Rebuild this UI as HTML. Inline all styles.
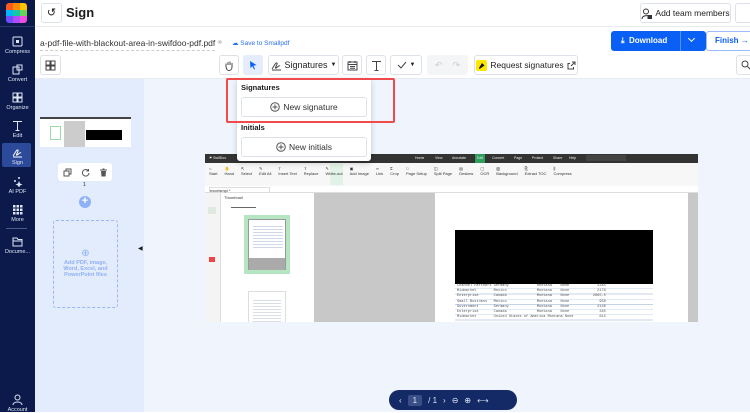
<!DOCTYPE html>
<html><head><meta charset="utf-8"><style>
*{box-sizing:border-box;margin:0;padding:0}
body{width:750px;height:412px;overflow:hidden;font-family:"Liberation Sans",sans-serif;background:#fff;position:relative;color:#1a1a1a}
.a{position:absolute}
.sb{left:0;top:0;width:35px;height:412px;background:#0b1a4b}
.si{position:absolute;left:0;width:35px;text-align:center;color:#dfe6f5;font-size:5.5px;white-space:nowrap}
.si svg{display:block;margin:0 auto 2px}
.btn{position:absolute;border:1px solid #dde1e8;border-radius:3px;background:#fff}
.tb{font-size:9px;color:#222;display:flex;align-items:center;justify-content:center;white-space:nowrap;gap:3px}
.sm{font-size:4px;color:#333}
</style></head><body>
<div class="a sb"></div>
<div class="a" style="left:6px;top:3px;width:21px;height:20px;border-radius:3px;overflow:hidden;display:grid;grid-template-columns:1fr 1fr 1fr">
<div style="background:#ff5a1f"></div><div style="background:#ff8c00"></div><div style="background:#ffc400"></div>
<div style="background:#00b4ff"></div><div style="background:#17c7a0"></div><div style="background:#6ad15a"></div>
<div style="background:#6e4cff"></div><div style="background:#b04cff"></div><div style="background:#f04ce0"></div></div>
<div class="a" style="left:0;top:26px;width:35px;height:1px;background:#2a3a6a"></div>
<div class="si" style="top:36px"><svg width="11" height="11"><rect x="1" y="1" width="9" height="9" rx="1" fill="none" stroke="#dfe6f5"/><rect x="4" y="4" width="3" height="3" fill="#dfe6f5"/></svg>Compress</div>
<div class="si" style="top:64px"><svg width="11" height="11"><rect x="1" y="3" width="6" height="7" fill="none" stroke="#dfe6f5"/><rect x="5" y="1" width="5" height="5" fill="none" stroke="#dfe6f5"/></svg>Convert</div>
<div class="si" style="top:92px"><svg width="11" height="11" fill="none" stroke="#dfe6f5"><rect x="1" y="1" width="4" height="4"/><rect x="6" y="1" width="4" height="4"/><rect x="1" y="6" width="4" height="4"/><rect x="6" y="6" width="4" height="4"/></svg>Organize</div>
<div class="si" style="top:120px"><svg width="11" height="11" stroke="#dfe6f5"><path d="M1 1.5H10M5.5 1.5V10.5M3.5 10.5H7.5"/></svg>Edit</div>
<div class="a" style="left:2px;top:143px;width:29px;height:24px;background:#2b4a9a;border-radius:2px"></div>
<div class="si" style="top:147px"><svg width="11" height="11" fill="none" stroke="#fff"><path d="M1 9C3 6 5 2 6 3S3 9 5 8 8 5 9 6M1 10H10"/></svg>Sign</div>
<div class="si" style="top:176px"><svg width="11" height="11" fill="#dfe6f5"><circle cx="3" cy="5" r="1"/><circle cx="7" cy="2" r="1"/><path d="M7 5L8 7.5 10.5 8.5 8 9.5 7 12 6 9.5 3.5 8.5 6 7.5Z"/></svg>AI PDF</div>
<div class="si" style="top:204px"><svg width="11" height="11" fill="#dfe6f5"><rect x="1" y="1" width="2.5" height="2.5"/><rect x="4.5" y="1" width="2.5" height="2.5"/><rect x="8" y="1" width="2.5" height="2.5"/><rect x="1" y="4.5" width="2.5" height="2.5"/><rect x="4.5" y="4.5" width="2.5" height="2.5"/><rect x="8" y="4.5" width="2.5" height="2.5"/><rect x="1" y="8" width="2.5" height="2.5"/><rect x="4.5" y="8" width="2.5" height="2.5"/><rect x="8" y="8" width="2.5" height="2.5"/></svg>More</div>
<div class="a" style="left:6px;top:228px;width:21px;height:1px;background:#4a5a88"></div>
<div class="si" style="top:236px"><svg width="11" height="11" fill="none" stroke="#dfe6f5"><path d="M1 2H5L6 3.5H10V10H1Z"/><path d="M1 5H10"/></svg>Docume...</div>
<div class="si" style="top:394px"><svg width="11" height="11" fill="none" stroke="#dfe6f5"><circle cx="5.5" cy="3.5" r="2.5"/><path d="M1 11C1 7 10 7 10 11"/></svg>Account</div>

<!-- header -->
<div class="a" style="left:35px;top:26px;width:715px;height:1px;background:#e8ebf0"></div>
<div class="btn" style="left:41px;top:3px;width:21px;height:20px;font-size:11px;text-align:center;line-height:18px">↺</div>
<div class="a" style="left:66px;top:5px;font-size:13px;font-weight:bold">Sign</div>
<div class="btn tb" style="left:640px;top:3px;width:91px;height:20px;font-size:8.5px"><svg width="11" height="11" fill="none" stroke="#333"><circle cx="5" cy="3.5" r="2.5"/><path d="M1 11C1 7 8 7 9 9"/><rect x="7" y="7.5" width="3.5" height="3" fill="#333"/></svg>Add team members</div>
<div class="btn" style="left:735px;top:3px;width:20px;height:20px"></div>

<div class="a" style="left:40px;top:38px;font-size:8.5px;color:#333;border-bottom:1px dashed #ccc;padding-bottom:2px;white-space:nowrap">a-pdf-file-with-blackout-area-in-swifdoo-pdf.pdf</div>
<div class="a" style="left:216px;top:37px;font-size:9px;color:#bbb">⚭</div>
<div class="a" style="left:232px;top:39px;font-size:6.5px;color:#2a6ef2;white-space:nowrap">☁ Save to Smallpdf</div>
<div class="a" style="left:611px;top:31px;width:95px;height:20px;background:#0a5ff5;border-radius:3px;color:#fff;font-size:8px;font-weight:bold;line-height:20px;padding-left:10px">⤓&nbsp; Download</div>
<div class="a" style="left:680px;top:31px;width:1px;height:20px;background:#5a8ff8"></div>
<div class="a" style="left:689px;top:36px;width:5px;height:5px;border-right:1px solid #fff;border-bottom:1px solid #fff;transform:rotate(45deg)"></div>
<div class="a" style="left:706px;top:31px;width:50px;height:20px;border:1px solid #9bbcf8;border-radius:3px;color:#0a5ff5;font-size:8px;font-weight:bold;line-height:18px;padding-left:8px;white-space:nowrap">Finish →</div>

<!-- toolbar -->
<div class="btn tb" style="left:40px;top:55px;width:21px;height:20px"><svg width="11" height="11" fill="none" stroke="#444"><rect x="1" y="1" width="4" height="4"/><rect x="6" y="1" width="4" height="4"/><rect x="1" y="6" width="4" height="4"/><rect x="6" y="6" width="4" height="4"/></svg></div>
<div class="btn tb" style="left:219px;top:55px;width:20px;height:20px"><svg width="10" height="11" fill="none" stroke="#444"><path d="M2 6V3.5M4 5V2M6 5V1.5M8 5.5V3M2 6C2 9 3.5 10.5 5 10.5S8 9.5 8 7V5.5"/></svg></div>
<div class="a tb" style="left:243px;top:55px;width:20px;height:20px;background:#e4ecfd;border-radius:3px"><svg width="10" height="10"><path d="M2 1L8.5 5 5.5 5.8 7 9 6 9.5 4.5 6.3 2.5 8Z" fill="#0a5ff5"/></svg></div>
<div class="btn tb" style="left:268px;top:55px;width:71px;height:20px"><svg width="11" height="11" fill="none" stroke="#444"><path d="M1 9C3 6 5 2 6 3S3 9 5 8 8 5 9 6M1 10H10"/></svg>Signatures <span style="font-size:6px">▼</span></div>
<div class="btn tb" style="left:342px;top:55px;width:20px;height:20px"><svg width="11" height="11" fill="none" stroke="#444"><rect x="1" y="2" width="9" height="8"/><path d="M1 4.5H10M3 1V3M8 1V3M3 6.5H8M3 8.3H8"/></svg></div>
<div class="btn tb" style="left:366px;top:55px;width:20px;height:20px"><svg width="11" height="11" stroke="#444" fill="none"><path d="M1 1.5H10M5.5 1.5V10.5M3.5 10.5H7.5"/></svg></div>
<div class="btn tb" style="left:390px;top:55px;width:32px;height:20px"><svg width="10" height="8" fill="none" stroke="#444"><path d="M1 4L4 7 9 1"/></svg><span style="font-size:6px">▼</span></div>
<div class="a tb" style="left:427px;top:55px;width:41px;height:20px;background:#f4f5f7;border-radius:3px;color:#ccc;gap:10px">↶<span>↷</span></div>
<div class="btn tb" style="left:474px;top:55px;width:104px;height:20px;font-size:8.5px"><span style="background:#ffe600;border-radius:2px;width:11px;height:11px;display:inline-block;position:relative"><svg width="11" height="11" style="position:absolute;left:0;top:0"><path d="M3 8L6 3 8.5 5.5 3.5 9Z" fill="#111"/></svg></span>Request signatures <svg width="9" height="9" fill="none" stroke="#444"><path d="M5 1H8V4M8 1L4 5M6.5 6V8H1V2.5H3"/></svg></div>
<div class="btn tb" style="left:736px;top:55px;width:20px;height:20px"><svg width="10" height="10" fill="none" stroke="#444"><circle cx="4" cy="4" r="3"/><path d="M6.5 6.5L9.5 9.5"/></svg></div>
<div class="a" style="left:35px;top:78px;width:715px;height:1px;background:#e8ebf0"></div>

<!-- content -->
<div class="a" style="left:35px;top:79px;width:109px;height:333px;background:#e3ecfc"></div>
<div class="a" style="left:144px;top:79px;width:606px;height:333px;background:#eff4fd"></div>
<div class="a" style="left:40px;top:117px;width:91px;height:30px;background:#fff;border-top:2px solid #444">
<div class="a" style="left:10px;top:7px;width:11px;height:14px;border:1px solid #9ed9a8"></div>
<div class="a" style="left:24px;top:2px;width:21px;height:26px;background:#ccc"></div>
<div class="a" style="left:46px;top:11px;width:36px;height:10px;background:#000"></div></div>
<div class="a" style="left:58px;top:163px;width:54px;height:18px;background:#fff;border-radius:3px;display:flex;justify-content:space-around;align-items:center">
<svg width="9" height="9" fill="none" stroke="#555"><rect x="1" y="3" width="5" height="5"/><path d="M3 3V1H8V6H6"/></svg>
<svg width="9" height="9" fill="none" stroke="#555"><path d="M7.5 3A3.3 3.3 0 1 0 8 5M7.5 1V3H5.5"/></svg>
<svg width="9" height="9" fill="#555"><rect x="1" y="1.5" width="7" height="1"/><rect x="3.5" y="0.5" width="2" height="1"/><path d="M2 3H7L6.5 8.5H2.5Z"/></svg></div>
<div class="a" style="left:83px;top:182px;font-size:5px">1</div>
<div class="a" style="left:79px;top:196px;width:12px;height:12px;border-radius:50%;background:#8fb2f7;color:#fff;font-size:11px;line-height:11px;text-align:center;font-weight:bold">+</div>
<div class="a" style="left:53px;top:220px;width:65px;height:88px;border:1px dashed #9ab7f3;border-radius:3px;text-align:center;color:#8fb0f4;font-size:5.5px;font-weight:bold;padding-top:27px;line-height:6px"><div style="font-size:10px;font-weight:normal;line-height:12px">⊕</div>Add PDF, image,<br>Word, Excel, and<br>PowerPoint files</div>
<div class="a" style="left:138px;top:245px;font-size:6px">◀</div>

<!-- embedded screenshot -->
<div class="a" style="left:205px;top:154px;width:493px;height:168px;background:#c8c8c8;overflow:hidden">
<div class="a" style="left:0;top:0;width:493px;height:9px;background:#333;color:#eee;font-size:3.5px;line-height:9px;padding-left:4px">⚑ SwifDoo
<span class="a" style="left:210px">Home</span><span class="a" style="left:230px">View</span><span class="a" style="left:247px">Annotate</span><span class="a" style="left:270px;background:#2e9d5e;padding:0 2px">Edit</span><span class="a" style="left:287px">Convert</span><span class="a" style="left:309px">Page</span><span class="a" style="left:327px">Protect</span><span class="a" style="left:348px">Share</span><span class="a" style="left:364px">Help</span><span class="a" style="left:381px;width:40px;height:6px;top:1px;background:#444"></span></div>
<div class="a" style="left:0;top:9px;width:493px;height:23px;background:#f7f7f7"></div>
<div class="a" style="left:125px;top:10px;width:13px;height:21px;background:#e1f3e6"></div>
<div class="a sm" style="left:4px;top:12px;width:390px;display:flex;gap:7px;line-height:5px;white-space:nowrap"><span>⌂<br>Start</span><span>✋<br>Hand</span><span>⇱<br>Select</span><span>✎<br>Edit All</span><span>T<br>Insert Text</span><span>⇪<br>Replace</span><span>✎<br>White-out</span><span>▣<br>Add Image</span><span>∞<br>Link</span><span>⌗<br>Crop</span><span>□<br>Page Setup</span><span>◫<br>Split Page</span><span>▤<br>Deskew</span><span>▢<br>OCR</span><span>▧<br>Background</span><span>⎘<br>Extract TOC</span><span>⫼<br>Compress</span></div>
<div class="a" style="left:0;top:32px;width:493px;height:7px;background:#fff;border-bottom:1px solid #ddd"><div class="a sm" style="left:4px;top:1px;width:61px;height:6px;border:1px solid #ddd;border-bottom:none">excelsmpl *</div></div>
<div class="a" style="left:0;top:39px;width:15px;height:129px;background:#f4f4f4"><div class="a" style="left:3px;top:14px;width:8px;height:7px;background:#dfe9df"></div><div class="a" style="left:4px;top:64px;width:6px;height:5px;background:#e44"></div></div>
<div class="a" style="left:15px;top:39px;width:94px;height:129px;background:#fff;border-left:1px solid #ddd">
<div class="a sm" style="left:3px;top:2px">Thumbnail</div>
<div class="a" style="left:10px;top:14px;width:25px;height:1px;background:#666"></div>
<div class="a" style="left:23px;top:22px;width:46px;height:59px;background:#b6e5c2"><div class="a" style="left:4px;top:4px;width:38px;height:51px;background:#fff;border:1px solid #999"><div class="a" style="left:4px;top:4px;width:30px;height:26px;background:repeating-linear-gradient(#fff 0 2px,#cfd8e6 2px 3px)"></div><div class="a" style="left:0;top:38px;width:36px;height:12px;background:#aaa"></div></div></div>
<div class="a" style="left:27px;top:98px;width:38px;height:40px;background:#fff;border:1px solid #ddd"><div class="a" style="left:4px;top:6px;width:28px;height:30px;background:repeating-linear-gradient(#fff 0 2px,#d8dde6 2px 3px)"></div></div></div>
<div class="a" style="left:230px;top:39px;width:253px;height:129px;background:#fff">
<div class="a" style="left:20px;top:37px;width:198px;height:54px;background:#000"></div>
<div class="a" style="left:20px;top:91px;width:198px;height:38px;background:repeating-linear-gradient(#fff 0 4.5px,#c6d3ea 4.5px 5.2px);font-family:'Liberation Mono',monospace;font-size:3.6px;line-height:5.2px;color:#555;padding-left:2px;white-space:pre">Channel Partners Germany             Montana    None             1345
Midmarket        Mexico              Montana    None             2178
Enterprise       Canada              Montana    None           2665.5
Small Business   Mexico              Montana    None              958
Government       Germany             Montana    None             2146
Enterprise       Canada              Montana    None              345
Midmarket        United States of America Montana None            615</div></div>
</div>

<!-- dropdown -->
<div class="a" style="left:237px;top:78px;width:134px;height:83px;background:#fff;border-radius:3px;box-shadow:0 2px 6px rgba(0,0,0,.2)"></div>
<div class="a" style="left:226px;top:78px;width:169px;height:45px;border:2.5px solid #f04b4b;border-radius:2px"></div>
<div class="a" style="left:241px;top:83px;font-size:7.5px;font-weight:bold">Signatures</div>
<div class="btn tb" style="left:241px;top:97px;width:126px;height:20px;font-size:8.5px;color:#333"><svg width="10" height="10" fill="none" stroke="#555"><circle cx="5" cy="5" r="4.3"/><path d="M5 2.5V7.5M2.5 5H7.5"/></svg>New signature</div>
<div class="a" style="left:241px;top:123px;font-size:7.5px;font-weight:bold">Initials</div>
<div class="btn tb" style="left:241px;top:137px;width:126px;height:20px;font-size:8.5px;color:#333"><svg width="10" height="10" fill="none" stroke="#555"><circle cx="5" cy="5" r="4.3"/><path d="M5 2.5V7.5M2.5 5H7.5"/></svg>New initials</div>

<!-- pager -->
<div class="a" style="left:389px;top:390px;width:128px;height:20px;background:#132a66;border-radius:10px;color:#dfe6f5;font-size:8px;display:flex;align-items:center;padding-left:10px;gap:6px;white-space:nowrap">
<span>‹</span><span style="background:#3a4f85;padding:1px 5px;border-radius:2px">1</span><span>/ 1</span><span>›</span><span>⊖</span><span>⊕</span><span>⟷</span></div>
</body></html>
